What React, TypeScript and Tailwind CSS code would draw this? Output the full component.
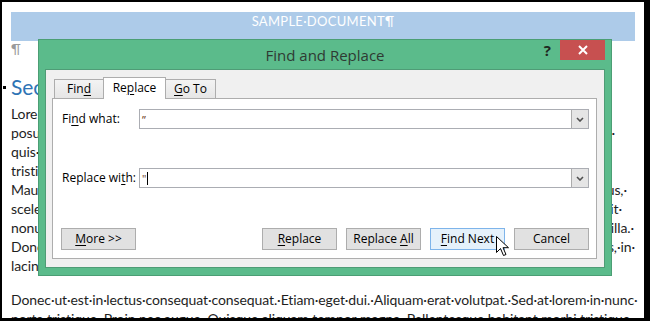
import React from "react";

const ui = "font-['Segoe_UI','Open_Sans',sans-serif] text-[12px] text-black";

function U({ children }: { children: React.ReactNode }) {
  return <span className="underline underline-offset-[2px]">{children}</span>;
}

const docLines = [
  { left: "Lorem·ipsum·dolor·sit·amet,·consectetuer·adipiscing·elit.·Maecenas·porttitor", right: "", pad: "" },
  { left: "posuere·magna·sed·pulvinar·ultricies,·purus·lectus·malesuada·libero,·sit", right: "urna·", pad: "pr-[20px]" },
  { left: "quis·urna.·Nunc·viverra·imperdiet·enim.·Fusce·est.·Vivamus·a·tellus.", right: "", pad: "" },
  { left: "tristique·senectus·et·netus·et·malesuada·fames·ac·turpis·egestas.", right: "", pad: "" },
  { left: "Mauris·et·orci.·Aenean·nec·lorem.·In·porttitor.·Donec·laoreet·nonummy", right: "dapibus,·", pad: "pr-[8px]" },
  { left: "scelerisque·at,·vulputate·vitae,·pretium·mattis,·nunc.·Mauris·eget·neque", right: "velit·", pad: "pr-[13px]" },
  { left: "nonummy·pede.·Mauris·et·orci.·Aenean·nec·lorem.·In·porttitor.·Donec", right: "fringilla.·", pad: "pr-[1px]" },
  { left: "Donec·blandit·feugiat·ligula.·Donec·hendrerit,·felis·et·imperdiet·euismod", right: "lacus,·in·", pad: "pr-0" },
  { left: "lacinia·nulla·nisl·eget·sapien.¶", right: "", pad: "" },
];

function DocLine({ left, right, pad }: { left: string; right: string; pad: string }) {
  return (
    <div className="flex h-[19px] items-center leading-[19px]">
      <span className="min-w-0 flex-1 overflow-hidden whitespace-nowrap">{left}</span>
      {right && <span className={`shrink-0 whitespace-nowrap ${pad}`}>{right}</span>}
    </div>
  );
}

function Combo({ value, caret }: { value: string; caret?: boolean }) {
  return (
    <div className="flex h-[20px] flex-1 border border-[#abadb3] bg-white">
      <div className="flex flex-1 items-center pl-[2px] text-[11px] text-[#6b3b1a]">
        <span className="leading-none">{value}</span>
        {caret && <span className="ml-[1px] h-[13px] w-px bg-black" />}
      </div>
      <div className="flex w-[17px] items-center justify-center border-l border-[#acacac] bg-[#e5e5e5]">
        <svg width="8" height="5" viewBox="0 0 8 5">
          <path d="M1 1l3 3 3-3" stroke="#505050" strokeWidth="1.6" fill="none" />
        </svg>
      </div>
    </div>
  );
}

function Btn({ children, active }: { children: React.ReactNode; active?: boolean }) {
  return (
    <div
      className={`flex h-[22px] w-[75px] items-center justify-center border ${
        active ? "border-[#7eb4ea] bg-[#e5f1fb]" : "border-[#adadad] bg-[#e1e1e1]"
      }`}
    >
      <span>{children}</span>
    </div>
  );
}

export default function App() {
  return (
    <div className="h-[321px] w-[650px] bg-black pb-[3px] pl-[2px] pr-[6px] pt-[2px]">
      <div className="relative h-full w-full overflow-hidden bg-white font-['Lato',sans-serif] text-[14px] tracking-[-0.1px] text-[#1e1e1e]">
        <div className="pl-[9px] pr-[7px]">
          <div className="mt-[10px] flex h-[29px] w-[624px] justify-center bg-[#adcbe9] pt-[1px]">
            <span className="text-[13px] leading-[16px] tracking-[0.3px] text-white">SAMPLE·DOCUMENT¶</span>
          </div>
          <div className="h-[16px] text-[14px] leading-[16px] text-[#9a9a9a]">¶</div>
          <div className="-ml-[8px] mt-[17px] flex h-[26px] items-center">
            <span className="mr-[5px] h-[3px] w-[3px] bg-black" />
            <span className="text-[21px] leading-[26px] text-[#2e74b5]">Section·Heading¶</span>
          </div>
          <div className="mt-[4px] w-[624px]">
            {docLines.map((l, i) => (
              <DocLine key={i} {...l} />
            ))}
          </div>
          <div className="mt-[15px] whitespace-nowrap leading-[19px]">
            <div>Donec·ut·est·in·lectus·consequat·consequat.·Etiam·eget·dui.·Aliquam·erat·volutpat.·Sed·at·lorem·in·nunc·</div>
            <div>porta·tristique.·Proin·nec·augue.·Quisque·aliquam·tempor·magna.·Pellentesque·habitant·morbi·tristique·</div>
          </div>
        </div>

        {/* dialog */}
        <div className={`absolute left-[36px] top-[37px] flex h-[237px] w-[574px] flex-col border border-[#4b9e74] bg-[#5bbb8b] px-[6px] pb-[7px] tracking-normal ${ui}`}>
          <div className="grid h-[29px] grid-cols-[1fr_auto_1fr]">
            <div />
            <div className="flex items-center pt-[1px] text-[15px] text-[#2f3a33]">Find and Replace</div>
            <div className="flex justify-end">
              <div className="mr-[9px] h-[21px] text-[15px] font-bold leading-[21px] text-[#1f2a22]">?</div>
              <div className="flex h-[20px] w-[45px] items-center justify-center bg-[#c75050]">
                <svg width="10" height="10" viewBox="0 0 10 10">
                  <path d="M1 1l8 8M9 1l-8 8" stroke="white" strokeWidth="2" />
                </svg>
              </div>
            </div>
          </div>

          <div className="flex flex-1 flex-col border border-[#4f9c76] bg-[#f0f0f0] pb-[8px] pl-[6px] pr-[7px] pt-[7px]">
            <div className="relative z-10 -mb-px ml-[2px] flex h-[22px] items-end">
              <div className="mb-px flex h-[19px] w-[50px] items-center justify-center border border-b-0 border-[#adadad] bg-linear-to-b from-[#f3f3f3] to-[#e6e6e6]">
                <span>
                  Fin<U>d</U>
                </span>
              </div>
              <div className="-ml-px flex h-[22px] w-[63px] items-center justify-center border border-b-0 border-[#adadad] bg-white pb-[2px]">
                <span>
                  Re<U>p</U>lace
                </span>
              </div>
              <div className="-ml-px mb-px flex h-[19px] w-[51px] items-center justify-center border border-b-0 border-[#adadad] bg-linear-to-b from-[#f3f3f3] to-[#e6e6e6]">
                <span>
                  <U>G</U>o To
                </span>
              </div>
            </div>

            <div className="flex flex-1 flex-col border border-[#adadad] bg-white pl-[8px] pr-[7px] pt-[10px]">
              <div className="flex h-[20px] items-center">
                <div className="w-[78px] pl-[1px]">
                  Fi<U>n</U>d what:
                </div>
                <Combo value={"\u201D"} />
              </div>
              <div className="mt-[39px] flex h-[20px] items-center">
                <div className="w-[78px] pl-[1px]">
                  Replace wi<U>t</U>h:
                </div>
                <Combo value={'"'} caret />
              </div>
              <div className="mt-[40px] flex">
                <Btn>
                  <U>M</U>ore &gt;&gt;
                </Btn>
                <div className="ml-auto flex gap-[9px]">
                  <Btn>
                    <U>R</U>eplace
                  </Btn>
                  <Btn>
                    Replace <U>A</U>ll
                  </Btn>
                  <Btn active>
                    <U>F</U>ind Next
                  </Btn>
                  <Btn>Cancel</Btn>
                </div>
              </div>
            </div>
          </div>
        </div>

        {/* mouse pointer */}
        <svg className="absolute left-[494px] top-[234px]" width="13" height="21" viewBox="0 0 13 21">
          <path d="M0.5 0.5v16l4-4 3 7 2.5-1-3-6.8h5.5z" fill="white" stroke="black" strokeWidth="1" />
        </svg>
      </div>
    </div>
  );
}
